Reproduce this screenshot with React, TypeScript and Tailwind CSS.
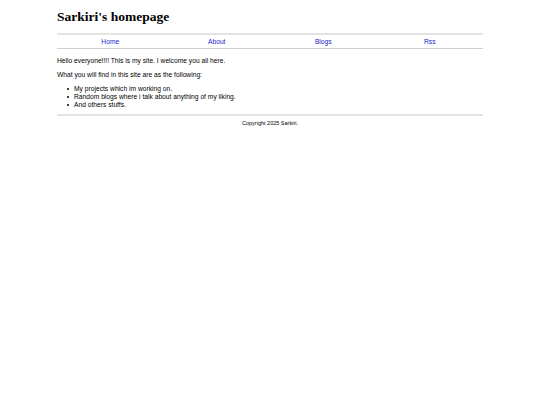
const items = [
  "My projects which im working on.",
  "Random blogs where i talk about anything of my liking.",
  "And others stuffs.",
];

export default function App() {
  return (
    <div className="min-h-[405px] bg-white font-['Liberation_Sans',Arial,sans-serif] text-black">
      <div className="mx-auto w-[426px] pt-[9px]">
        <h1 className="font-['Liberation_Serif','Times_New_Roman',serif] text-[13.5px] font-bold leading-[15px]">
          Sarkiri's homepage
        </h1>

        {/* nav */}
        <nav className="mt-[9px] flex border-t-2 border-b border-t-[#e3e3e3] border-b-[#d0d0d0] py-[2px]">
          <a href="#" className="flex-1 text-center text-[6.7px] leading-[9px] text-[#2222cc]">Home</a>
          <a href="#" className="flex-1 text-center text-[6.7px] leading-[9px] text-[#2222cc]">About</a>
          <a href="#" className="flex-1 text-center text-[6.7px] leading-[9px] text-[#2222cc]">Blogs</a>
          <a href="#" className="flex-1 text-center text-[6.7px] leading-[9px] text-[#2222cc]">Rss</a>
        </nav>

        <main className="text-[6.7px] leading-[8px]">
          <p className="mt-[8px]">Hello everyone!!!! This is my site. I welcome you all here.</p>
          <p className="mt-[6px]">What you will find in this site are as the following:</p>
          <ul className="mt-[6px] pl-[10px]">
            {items.map((t) => (
              <li key={t} className="flex items-center">
                <span className="mr-[5px] h-[2px] w-[2px] rounded-full bg-black" />
                {t}
              </li>
            ))}
          </ul>
        </main>

        <footer className="mt-[5px] border-t-2 border-t-[#e3e3e3] pt-[4px] text-center text-[5.5px] leading-[7px]">
          Copyright 2025 Sarkiri.
        </footer>
      </div>
    </div>
  );
}
